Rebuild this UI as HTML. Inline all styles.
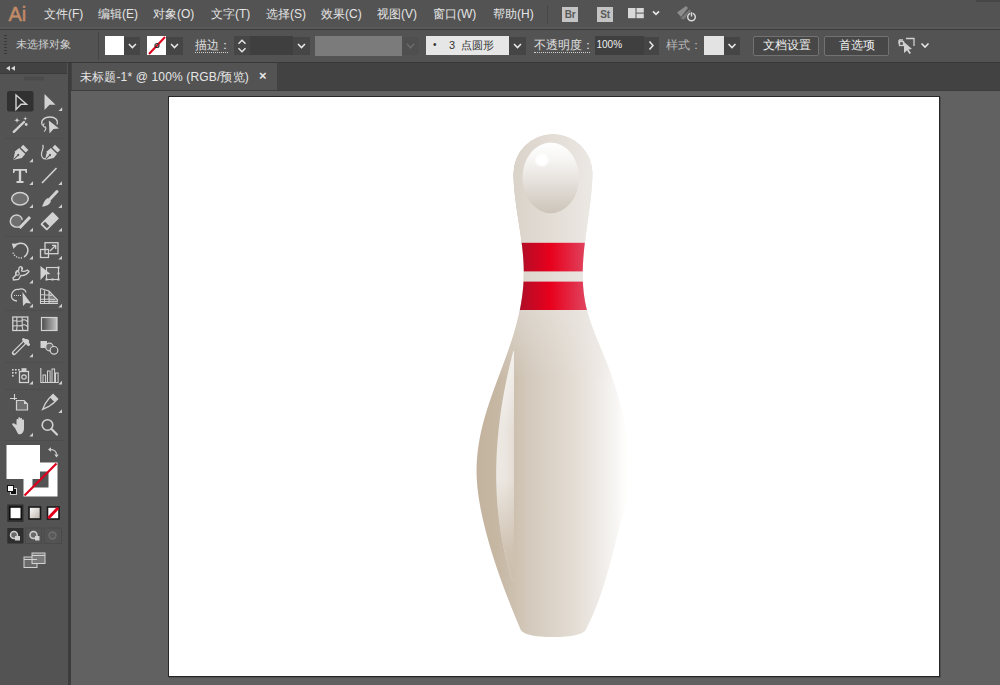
<!DOCTYPE html><html><head><meta charset="utf-8"><style>
*{margin:0;padding:0;box-sizing:border-box}
html,body{width:1000px;height:685px;overflow:hidden}
body{position:relative;background:#616161;font-family:"Liberation Sans",sans-serif;color:#e2e2e2}
.a{position:absolute}
.menu{font-size:12px;color:#e4e4e4;top:7px;white-space:nowrap;line-height:14px}
.chev{background:#454545}
.ctl{font-size:12px;white-space:nowrap;line-height:14px}
</style></head><body>
<div class="a" style="left:0;top:0;width:1000px;height:28px;background:#535353"></div>
<div class="a" style="left:0;top:27px;width:1000px;height:2px;background:#595959"></div>
<div class="a" style="left:976px;top:0;width:24px;height:2px;background:#474747"></div>
<div class="a" style="left:0;top:29px;width:1000px;height:1px;background:#3b3b3b"></div>
<div class="a" style="left:8.5px;top:2.5px;font-size:20px;color:#c28b68;line-height:22px;-webkit-text-stroke:0.5px #c28b68">Ai</div>
<div class="a menu" style="left:44px">文件(F)</div>
<div class="a menu" style="left:98px">编辑(E)</div>
<div class="a menu" style="left:153px">对象(O)</div>
<div class="a menu" style="left:211px">文字(T)</div>
<div class="a menu" style="left:266px">选择(S)</div>
<div class="a menu" style="left:321px">效果(C)</div>
<div class="a menu" style="left:377px">视图(V)</div>
<div class="a menu" style="left:433px">窗口(W)</div>
<div class="a menu" style="left:493px">帮助(H)</div>
<div class="a" style="left:547px;top:5px;width:1px;height:19px;background:#474747"></div>
<div class="a" style="left:562px;top:7px;width:16px;height:15px;background:#c4c4c4"></div>
<div class="a" style="left:562px;top:8px;width:16px;font-size:10px;line-height:13px;font-weight:bold;color:#5a5a5a;text-align:center;letter-spacing:-0.3px">Br</div>
<div class="a" style="left:597px;top:7px;width:16px;height:15px;background:#c4c4c4"></div>
<div class="a" style="left:597px;top:8px;width:16px;font-size:10px;line-height:13px;font-weight:bold;color:#5a5a5a;text-align:center;letter-spacing:-0.3px">St</div>
<svg class="a" style="left:620px;top:0" width="90" height="28" viewBox="620 0 90 28"><rect x="628" y="8" width="7.5" height="10.2" fill="#d8d8d8"/><rect x="636.5" y="8" width="7.3" height="4.6" fill="#d8d8d8"/><rect x="636.5" y="13.6" width="7.3" height="4.6" fill="#d8d8d8"/><path d="M653,11.3 L656,14.3 L659,11.3" fill="none" stroke="#e6e6e6" stroke-width="1.7"/><path d="M677,12.5 L686,6 L688,8 L681,17 Z" fill="#8c8c8c"/><path d="M680.5,18.5 L689.5,9.5 L691,11 L684,19.5 Z" fill="#7a7a7a"/><circle cx="691.5" cy="17" r="5.2" fill="#535353"/><circle cx="691.5" cy="17" r="3.8" fill="none" stroke="#d8d8d8" stroke-width="1.5"/><path d="M691.5,11.8 L691.5,16.5" stroke="#535353" stroke-width="2.6"/><path d="M691.5,12.2 L691.5,16.5" stroke="#d8d8d8" stroke-width="1.5"/></svg>
<div class="a" style="left:0;top:30px;width:1000px;height:32px;background:#535353"></div>
<div class="a" style="left:0;top:62px;width:1000px;height:1px;background:#383838"></div>
<div class="a" style="left:4px;top:35px;width:3px;height:1px;background:#3a3a3a;"></div>
<div class="a" style="left:4px;top:38px;width:3px;height:1px;background:#3a3a3a;"></div>
<div class="a" style="left:4px;top:41px;width:3px;height:1px;background:#3a3a3a;"></div>
<div class="a" style="left:4px;top:44px;width:3px;height:1px;background:#3a3a3a;"></div>
<div class="a" style="left:4px;top:47px;width:3px;height:1px;background:#3a3a3a;"></div>
<div class="a" style="left:4px;top:50px;width:3px;height:1px;background:#3a3a3a;"></div>
<div class="a" style="left:4px;top:53px;width:3px;height:1px;background:#3a3a3a;"></div>
<div class="a ctl" style="left:15.5px;top:37.0px;font-size:11px;color:#d2d2d2;">未选择对象</div>
<div class="a" style="left:98px;top:32px;width:1px;height:28px;background:#454545;"></div>
<div class="a" style="left:105px;top:36px;width:18.5px;height:19px;background:#ffffff;"></div>
<div class="a" style="left:124px;top:37px;width:16px;height:18px;background:#454545;"></div>
<div class="a" style="left:147px;top:36px;width:19px;height:19px;background:#ffffff;"></div>
<div class="a" style="left:166px;top:37px;width:17px;height:18px;background:#454545;"></div>
<div class="a ctl" style="left:195px;top:37.5px;font-size:12px;color:#e0e0e0;">描边：</div>
<div class="a" style="left:195px;top:52px;width:33px;height:1px;border-top:1px dotted #cfcfcf"></div>
<div class="a" style="left:234px;top:36px;width:16px;height:19px;background:#464646;"></div>
<div class="a" style="left:250px;top:36px;width:43px;height:19px;background:#3f3f3f;"></div>
<div class="a" style="left:293px;top:37px;width:17px;height:18px;background:#464646;"></div>
<div class="a" style="left:315px;top:36px;width:87px;height:20px;background:#7b7b7b;"></div>
<div class="a" style="left:402px;top:37px;width:17px;height:18px;background:#4f4f4f;"></div>
<div class="a" style="left:426px;top:36px;width:83px;height:19px;background:#e6e6e6;"></div>
<div class="a ctl" style="left:433px;top:38.0px;font-size:10px;color:#333;">•</div>
<div class="a ctl" style="left:449px;top:38.0px;font-size:11px;color:#333;">3</div>
<div class="a ctl" style="left:461px;top:38.0px;font-size:11.3px;color:#333;">点圆形</div>
<div class="a" style="left:509px;top:37px;width:17px;height:18px;background:#454545;"></div>
<div class="a ctl" style="left:534px;top:37.5px;font-size:12px;color:#e0e0e0;">不透明度：</div>
<div class="a" style="left:534px;top:52px;width:56px;height:1px;border-top:1px dotted #cfcfcf"></div>
<div class="a" style="left:595px;top:36px;width:49px;height:19px;background:#3f3f3f;"></div>
<div class="a ctl" style="left:596.5px;top:37.5px;font-size:10px;color:#f0f0f0;">100%</div>
<div class="a" style="left:644px;top:37px;width:15px;height:18px;background:#454545;"></div>
<div class="a ctl" style="left:666px;top:37.5px;font-size:12px;color:#b8b8b8;">样式：</div>
<div class="a" style="left:704px;top:36px;width:20px;height:19px;background:#e3e3e3;"></div>
<div class="a" style="left:724px;top:37px;width:16px;height:18px;background:#454545;"></div>
<div class="a" style="left:753px;top:36px;width:66px;height:20px;border:1px solid #727272;background:#474747;border-radius:2px"></div>
<div class="a ctl" style="left:763px;top:37.5px;font-size:12px;color:#f0f0f0;">文档设置</div>
<div class="a" style="left:824px;top:36px;width:65px;height:20px;border:1px solid #727272;background:#474747;border-radius:2px"></div>
<div class="a ctl" style="left:839px;top:37.5px;font-size:12px;color:#f0f0f0;">首选项</div>
<svg class="a" style="left:0;top:29px" width="1000" height="33" viewBox="0 29 1000 33"><path d="M128.9,44.0 L132.4,47.6 L135.9,44.0" fill="none" stroke="#e8e8e8" stroke-width="1.5"/><path d="M171.0,44.0 L174.5,47.6 L178.0,44.0" fill="none" stroke="#e8e8e8" stroke-width="1.5"/><line x1="149" y1="54" x2="165" y2="37" stroke="#e0001c" stroke-width="2"/><circle cx="157" cy="45.5" r="2" fill="none" stroke="#333" stroke-width="1.2"/><path d="M238.5,43.8 L242.0,40.2 L245.5,43.8" fill="none" stroke="#e8e8e8" stroke-width="1.4"/><path d="M238.5,48.2 L242.0,51.8 L245.5,48.2" fill="none" stroke="#e8e8e8" stroke-width="1.4"/><path d="M298.0,44.0 L301.5,47.6 L305.0,44.0" fill="none" stroke="#e8e8e8" stroke-width="1.5"/><path d="M407.0,43.8 L410.5,47.8 L414.0,43.8" fill="none" stroke="#6a6a6a" stroke-width="1.5"/><path d="M514.0,44.0 L517.5,47.6 L521.0,44.0" fill="none" stroke="#e8e8e8" stroke-width="1.5"/><path d="M649.5,41.5 L653,45.5 L649.5,49.5" fill="none" stroke="#e8e8e8" stroke-width="1.5"/><path d="M728.5,44.0 L732.0,47.6 L735.5,44.0" fill="none" stroke="#e8e8e8" stroke-width="1.5"/><path d="M921.5,43.5 L925.0,47.1 L928.5,43.5" fill="none" stroke="#e8e8e8" stroke-width="1.5"/><g fill="none" stroke="#cfcfcf" stroke-width="1.3"><path d="M899,40 L903,40 M899,40 L899,44" /><rect x="899.5" y="41.5" width="4" height="4"/><path d="M906,38.5 L914,38.5 L914,46"/></g><path d="M904,42 L904,53 L907,50.5 L909.5,54 L911,53 L908.5,49.5 L912,49 Z" fill="#d0d0d0"/></svg>
<div class="a" style="left:71px;top:63px;width:929px;height:27px;background:#424242"></div>
<div class="a" style="left:72px;top:63px;width:205px;height:27px;background:#535353"></div>
<div class="a" style="left:71px;top:90px;width:929px;height:1px;background:#3d3d3d"></div>
<div class="a ctl" style="left:80px;top:70px;color:#e6e6e6;letter-spacing:0.15px">未标题-1* @ 100% (RGB/预览)</div>
<div class="a" style="left:259px;top:68px;font-size:13px;font-weight:bold;color:#e6e6e6">×</div>
<div class="a" style="left:0;top:63px;width:68px;height:622px;background:#535353"></div>
<div class="a" style="left:68px;top:63px;width:3px;height:622px;background:#3c3c3c"></div>
<div class="a" style="left:0;top:63px;width:67px;height:10px;background:#424242"></div>
<div class="a" style="left:0;top:73px;width:67px;height:1px;background:#3a3a3a"></div>
<svg class="a" style="left:0;top:62px" width="70" height="623" viewBox="0 62 70 623">
<path d="M6,68.3 L10,65.8 L10,70.8 Z M11,68.3 L15,65.8 L15,70.8 Z" fill="#d8d8d8"/>
<rect x="24.5" y="76.5" width="1" height="4" fill="#444444"/>
<rect x="26.5" y="76.5" width="1" height="4" fill="#444444"/>
<rect x="28.5" y="76.5" width="1" height="4" fill="#444444"/>
<rect x="30.5" y="76.5" width="1" height="4" fill="#444444"/>
<rect x="32.5" y="76.5" width="1" height="4" fill="#444444"/>
<rect x="34.5" y="76.5" width="1" height="4" fill="#444444"/>
<rect x="36.5" y="76.5" width="1" height="4" fill="#444444"/>
<rect x="38.5" y="76.5" width="1" height="4" fill="#444444"/>
<rect x="40.5" y="76.5" width="1" height="4" fill="#444444"/>
<rect x="42.5" y="76.5" width="1" height="4" fill="#444444"/>
<rect x="7" y="91" width="26.5" height="20.5" rx="2" fill="#313131"/>
<path d="M16,95 L26.5,104.3 L21,104.3 L16,109.5 Z" fill="none" stroke="#d2d2d2" stroke-width="1.4" stroke-linejoin="miter"/>
<path d="M44.5,94 L55.5,104.8 L49.5,104.8 L44.5,110 Z" fill="#d2d2d2"/>
<path d="M62.2,107.3 L62.2,111.0 L58.5,111.0 Z" fill="#cfcfcf"/>
<path d="M13.8,131.8 L24,122" stroke="#d2d2d2" stroke-width="2.4" stroke-linecap="round"/>
<path d="M17,117.1 Q17,120.3 20.2,120.3 Q17,120.3 17,123.5 Q17,120.3 13.8,120.3 Q17,120.3 17,117.1 Z" fill="#d2d2d2"/>
<path d="M25.3,115.9 Q25.3,118.5 27.900000000000002,118.5 Q25.3,118.5 25.3,121.1 Q25.3,118.5 22.7,118.5 Q25.3,118.5 25.3,115.9 Z" fill="#d2d2d2"/>
<circle cx="26.2" cy="124.5" r="1.4" fill="#d2d2d2"/>
<path d="M42.5,125.5 C40,121 44,117 50,117 C55,117 58.5,120 57,124.5" fill="none" stroke="#d2d2d2" stroke-width="1.3"/>
<path d="M44.5,123.5 C42,125 43.5,127.5 45.5,127 C46.5,128.5 45,131 44,131.5" fill="none" stroke="#d2d2d2" stroke-width="1.2"/>
<path d="M48.8,120.5 L59,128.5 L53.5,129 L49.5,133.5 Z" fill="#d2d2d2"/>
<rect x="5" y="138" width="58" height="1" fill="#4d4d4d"/>
<g transform="translate(20,153.2) rotate(45) scale(1.02)"><path d="M-4.2,-3 L4.2,-3 L4.6,2 L0,9.5 L-4.6,2 Z" fill="#d2d2d2"/><rect x="-3.6" y="-8" width="7.2" height="3.6" fill="#d2d2d2"/><path d="M0,9 L0,3" stroke="#535353" stroke-width="1"/><circle cx="0" cy="2.5" r="1.1" fill="#535353"/></g>
<path d="M33.0,158.6 L33.0,162.3 L29.3,162.3 Z" fill="#cfcfcf"/>
<g transform="translate(51.8,153.2) rotate(45) scale(1.02)"><path d="M-4.2,-3 L4.2,-3 L4.6,2 L0,9.5 L-4.6,2 Z" fill="#d2d2d2"/><rect x="-3.6" y="-8" width="7.2" height="3.6" fill="#d2d2d2"/><path d="M0,9 L0,3" stroke="#535353" stroke-width="1"/><circle cx="0" cy="2.5" r="1.1" fill="#535353"/></g>
<path d="M42.5,145 C45,147 41,151 41.5,155 C42,158 44,159.5 46,158.5" fill="none" stroke="#d2d2d2" stroke-width="1.2"/>
<path d="M13,169 L27,169 L27,173 L25.8,173 L25,170.8 L21.2,170.8 L21.2,181 L23.5,181 L23.5,183 L16.5,183 L16.5,181 L18.8,181 L18.8,170.8 L15,170.8 L14.2,173 L13,173 Z" fill="#d2d2d2"/>
<path d="M33.0,181.3 L33.0,185.0 L29.3,185.0 Z" fill="#cfcfcf"/>
<path d="M42,183 L56.5,168" stroke="#d2d2d2" stroke-width="1.6"/>
<path d="M62.0,181.3 L62.0,185.0 L58.3,185.0 Z" fill="#cfcfcf"/>
<ellipse cx="20" cy="198.8" rx="8.3" ry="6.2" fill="#6f6f6f" stroke="#d2d2d2" stroke-width="1.5"/>
<path d="M33.0,204.3 L33.0,208.0 L29.3,208.0 Z" fill="#cfcfcf"/>
<path d="M57,191.5 L49.5,199.5" stroke="#d2d2d2" stroke-width="3" stroke-linecap="round"/>
<path d="M48,198 L51,201 C50,204 47,206.5 42,206.5 C43.5,204 44,200 48,198 Z" fill="#d2d2d2"/>
<path d="M62.0,204.3 L62.0,208.0 L58.3,208.0 Z" fill="#cfcfcf"/>
<path d="M19,227 C13,228 9.5,224 10.5,220 C11.5,215.5 17,213.5 20.5,216.5 C22,217.7 22.3,219 22,220" fill="#6f6f6f" stroke="#d2d2d2" stroke-width="1.4"/>
<path d="M30,217 L19.5,228" stroke="#d2d2d2" stroke-width="3"/>
<path d="M33.0,227.8 L33.0,231.5 L29.3,231.5 Z" fill="#cfcfcf"/>
<g transform="translate(49.5,221.5) rotate(45)"><rect x="-4.6" y="-9" width="9.2" height="17.5" rx="1" fill="#d2d2d2"/><rect x="-3" y="3.2" width="6" height="3.5" fill="#535353"/></g>
<path d="M62.0,227.8 L62.0,231.5 L58.3,231.5 Z" fill="#cfcfcf"/>
<rect x="5" y="236" width="58" height="1" fill="#4d4d4d"/>
<path d="M14.5,246.5 C17,242.5 23.5,242 26.5,246 C29,249.5 28,254.5 24,257" fill="none" stroke="#d2d2d2" stroke-width="1.5"/>
<path d="M22,257.8 C18,258.5 14,256 13,252.5" fill="none" stroke="#d2d2d2" stroke-width="1.5" stroke-dasharray="1.2,1.3"/>
<path d="M11.8,243.5 L17.5,243.8 L13.5,249 Z" fill="#d2d2d2"/>
<path d="M33.0,255.8 L33.0,259.5 L29.3,259.5 Z" fill="#cfcfcf"/>
<rect x="40.5" y="249.5" width="8" height="8" fill="none" stroke="#d2d2d2" stroke-width="1.3"/>
<rect x="45" y="242.7" width="13" height="11" fill="none" stroke="#d2d2d2" stroke-width="1.3"/>
<path d="M50,251 L55.5,245.5 M52,245.3 L55.7,245.3 L55.7,249" fill="none" stroke="#d2d2d2" stroke-width="1.3"/>
<path d="M62.0,255.8 L62.0,259.5 L58.3,259.5 Z" fill="#cfcfcf"/>
<path d="M13,278 L16,275 C15,272 17,270 18.5,271 L19,268 C20,266 22,266.5 22.5,268.5 L21.5,271 C24,272 26,271 27.5,270 L29,271.5 C27,274 24,276 21,275.5 L18.5,279.5 L13.5,280 Z" fill="none" stroke="#d2d2d2" stroke-width="1.3"/>
<circle cx="17.5" cy="273.5" r="1.8" fill="none" stroke="#d2d2d2" stroke-width="1.1"/>
<circle cx="22" cy="268.5" r="1" fill="#d2d2d2"/>
<path d="M33.0,279.8 L33.0,283.5 L29.3,283.5 Z" fill="#cfcfcf"/>
<rect x="46.5" y="267.5" width="12" height="12" fill="#5d5d5d" stroke="#d2d2d2" stroke-width="1.1"/>
<rect x="57.5" y="266.5" width="2" height="2" fill="#d2d2d2"/>
<rect x="45.5" y="278.5" width="2" height="2" fill="#d2d2d2"/>
<rect x="57.5" y="278.5" width="2" height="2" fill="#d2d2d2"/>
<rect x="51.5" y="278.5" width="2" height="2" fill="#d2d2d2"/>
<rect x="57.5" y="272.5" width="2" height="2" fill="#d2d2d2"/>
<path d="M40.5,266 L50.5,274 L45.5,274.5 L40.5,280 Z" fill="#d2d2d2"/>
<path d="M17,301 C12.5,301 11,297.5 11.5,295 C12,291.5 15,289 18.5,289.5 C21,288 25.5,289 26,292.5" fill="none" stroke="#d2d2d2" stroke-width="1.3"/>
<path d="M14,295.5 L21,295.5" stroke="#d2d2d2" stroke-width="1" stroke-dasharray="1,1"/>
<path d="M22.5,292 L31,303.5 L26,303 L23,306 Z" fill="#d2d2d2"/>
<path d="M33.0,303.8 L33.0,307.5 L29.3,307.5 Z" fill="#cfcfcf"/>
<path d="M40.5,288.5 L40.5,303.5 L58,303.5 M40.5,288.5 L49,291 L58,300.5 M44.5,289.6 L44.5,303.5 M49,291 L49,303.5 M40.5,294.5 L52,295.5 M40.5,299 L55,299.5 M40.5,301.5 L58,301.5" fill="none" stroke="#d2d2d2" stroke-width="1.1"/>
<path d="M49,291 L58,300.5 L58,303.5 L49,303.5 Z" fill="#d2d2d2" opacity="0.35"/>
<path d="M62.0,303.8 L62.0,307.5 L58.3,307.5 Z" fill="#cfcfcf"/>
<rect x="5" y="310" width="58" height="1" fill="#4d4d4d"/>
<rect x="12.8" y="317" width="15" height="13.5" fill="none" stroke="#d2d2d2" stroke-width="1.3"/>
<path d="M13,321 C17,320 19,323 23,320 C25,319 27,321 28,322 M13,326 C17,325 20,327 23,325 C25,324 27,326 28,327 M17,317 C16,321 18,325 16.5,330.5 M22,317 C23,321 21,325 23,330.5" fill="none" stroke="#d2d2d2" stroke-width="1.1"/>
<defs><linearGradient id="tg" x1="0" y1="0" x2="1" y2="0"><stop offset="0" stop-color="#4a4a4a"/><stop offset="1" stop-color="#c4c4c4"/></linearGradient></defs>
<rect x="41.5" y="317.5" width="15.5" height="13" fill="url(#tg)" stroke="#d2d2d2" stroke-width="1.2"/>
<path d="M25,342 L14,353" stroke="#d2d2d2" stroke-width="4.5" stroke-linecap="round"/>
<path d="M24,343 L14.5,352.5" stroke="#535353" stroke-width="2" stroke-linecap="round"/>
<path d="M23.5,339.5 L28.5,344.5" stroke="#d2d2d2" stroke-width="3" stroke-linecap="round"/>
<circle cx="26.5" cy="341.5" r="2.6" fill="#d2d2d2"/>
<path d="M33.0,353.6 L33.0,357.3 L29.3,357.3 Z" fill="#cfcfcf"/>
<rect x="40.5" y="341" width="6.5" height="7" fill="#d2d2d2"/>
<circle cx="49.5" cy="347" r="3.8" fill="#6a6a6a" stroke="#d2d2d2" stroke-width="1.2"/>
<circle cx="54" cy="350.3" r="3.8" fill="#535353" stroke="#d2d2d2" stroke-width="1.2"/>
<rect x="5" y="362" width="58" height="1" fill="#4d4d4d"/>
<rect x="12" y="369" width="1.6" height="1.6" fill="#d2d2d2"/>
<rect x="15" y="369" width="1.6" height="1.6" fill="#d2d2d2"/>
<rect x="18" y="369" width="1.6" height="1.6" fill="#d2d2d2"/>
<rect x="12" y="372" width="1.6" height="1.6" fill="#d2d2d2"/>
<rect x="15" y="372" width="1.6" height="1.6" fill="#d2d2d2"/>
<rect x="12" y="375" width="1.6" height="1.6" fill="#d2d2d2"/>
<rect x="19.5" y="371.5" width="9" height="11" fill="none" stroke="#d2d2d2" stroke-width="1.3"/>
<rect x="21.5" y="368.2" width="5" height="3" fill="#d2d2d2"/>
<circle cx="24" cy="377" r="2.2" fill="none" stroke="#d2d2d2" stroke-width="1.2"/>
<path d="M33.0,380.8 L33.0,384.5 L29.3,384.5 Z" fill="#cfcfcf"/>
<path d="M40.8,368 L40.8,382.5 L58,382.5" fill="none" stroke="#d2d2d2" stroke-width="1.1"/>
<rect x="43" y="375" width="2.6" height="7.5" fill="none" stroke="#d2d2d2" stroke-width="1"/>
<rect x="47.5" y="371" width="2.6" height="11.5" fill="none" stroke="#d2d2d2" stroke-width="1"/>
<rect x="52" y="369" width="2.6" height="13.5" fill="none" stroke="#d2d2d2" stroke-width="1"/>
<rect x="55.5" y="373" width="2.6" height="9.5" fill="none" stroke="#d2d2d2" stroke-width="1"/>
<path d="M62.0,380.8 L62.0,384.5 L58.3,384.5 Z" fill="#cfcfcf"/>
<rect x="5" y="389" width="58" height="1" fill="#4d4d4d"/>
<path d="M14.5,394 L14.5,400 M10,398.5 L17,398.5" stroke="#d2d2d2" stroke-width="1.1"/>
<path d="M16.5,400.5 L24,400.5 L27.5,404 L27.5,410 L16.5,410 Z" fill="#6f6f6f" stroke="#d2d2d2" stroke-width="1.2"/>
<path d="M24,400.5 L24,404 L27.5,404" fill="#d2d2d2"/>
<g transform="translate(49,403) rotate(45)"><path d="M-3.2,-9 L3.2,-9 L3.2,-3 L2.2,3 L0,9 L-2.2,3 L-3.2,-3 Z" fill="none" stroke="#d2d2d2" stroke-width="1.3"/><rect x="-3.2" y="-9" width="6.4" height="4.5" fill="#d2d2d2"/></g>
<path d="M62.0,409.3 L62.0,413.0 L58.3,413.0 Z" fill="#cfcfcf"/>
<path d="M15,428 C13,425.5 11.5,424.5 12.5,423.5 C13.5,422.5 15.5,424 16.5,425 L16.5,419.8 C16.5,418.6 18.3,418.6 18.3,419.8 L18.3,424 L18.3,418.3 C18.3,417 20.2,417 20.2,418.3 L20.2,424 L20.2,418.8 C20.2,417.6 22.1,417.6 22.1,418.8 L22.1,424.3 L22.1,420.3 C22.1,419.1 24,419.1 24,420.3 L24,428 C24,432 22,434.3 19.5,434.3 C17.5,434.3 16.5,430.5 15,428 Z" fill="#d2d2d2"/>
<path d="M33.0,432.8 L33.0,436.5 L29.3,436.5 Z" fill="#cfcfcf"/>
<circle cx="47.5" cy="425" r="5.3" fill="none" stroke="#d2d2d2" stroke-width="1.6"/>
<path d="M51.5,429 L57,434.5" stroke="#d2d2d2" stroke-width="2.2" stroke-linecap="round"/>
<rect x="5" y="440" width="58" height="1" fill="#4d4d4d"/>
<rect x="23.5" y="462.5" width="34" height="34" fill="#ffffff"/>
<rect x="32.5" y="471.5" width="16" height="16" fill="#535353"/>
<path d="M24.5,495.5 L56.5,463.5" stroke="#e0001c" stroke-width="2.2"/>
<rect x="6.5" y="445" width="33.5" height="34" fill="#ffffff"/>
<path d="M49.5,449.5 C53,449.5 56.5,450 56.5,454.5" fill="none" stroke="#d2d2d2" stroke-width="1.2"/>
<path d="M48,449.5 L51,447.3 L51,451.7 Z M56.5,457.5 L54.3,454.5 L58.7,454.5 Z" fill="#d2d2d2"/>
<rect x="10.5" y="488.5" width="6" height="6" fill="#111" stroke="#d2d2d2" stroke-width="1"/>
<rect x="7.5" y="485.5" width="6" height="6" fill="#fff" stroke="#111" stroke-width="1"/>
<rect x="7.3" y="504.5" width="16.2" height="17.4" fill="#2f2f2f"/>
<rect x="9.8" y="507" width="11.5" height="12" fill="#fff" stroke="#111" stroke-width="1.6"/>
<defs><linearGradient id="tg2" x1="0" y1="0" x2="1" y2="1"><stop offset="0" stop-color="#ffffff"/><stop offset="1" stop-color="#b9b0a6"/></linearGradient></defs>
<rect x="29" y="507" width="11.5" height="12" fill="url(#tg2)" stroke="#1a1a1a" stroke-width="1.6"/>
<rect x="47.5" y="507" width="11.5" height="12" fill="#fff" stroke="#1a1a1a" stroke-width="1.6"/>
<path d="M48.3,518.2 L58.2,507.8" stroke="#e0001c" stroke-width="3"/>
<rect x="7.3" y="528" width="16.2" height="15.5" fill="#2f2f2f"/>
<rect x="25.5" y="528" width="16" height="15.5" fill="none" stroke="#4a4a4a" stroke-width="1"/>
<rect x="44" y="528" width="17.5" height="15.5" fill="none" stroke="#4a4a4a" stroke-width="1"/>
<circle cx="14" cy="535" r="3.5" fill="#6a6a6a" stroke="#d2d2d2" stroke-width="1.5"/><rect x="15" y="536" width="5" height="4.5" fill="#d2d2d2"/>
<circle cx="33.5" cy="535" r="3.5" fill="#6a6a6a" stroke="#d2d2d2" stroke-width="1.5"/><rect x="35" y="536" width="4.5" height="4.5" fill="#d2d2d2"/>
<circle cx="52.5" cy="535.5" r="3.5" fill="#5a5a5a" stroke="#6e6e6e" stroke-width="1.4"/>
<rect x="24" y="557" width="13" height="10.5" fill="#6a6a6a" stroke="#d2d2d2" stroke-width="1"/>
<rect x="32" y="553" width="13" height="10.5" fill="#7a7a7a" stroke="#d2d2d2" stroke-width="1"/>
<path d="M24,559.5 L37,559.5 M32,555.5 L45,555.5" stroke="#d2d2d2" stroke-width="1"/>
</svg>
<div class="a" style="left:168px;top:96px;width:772px;height:581px;background:#fff;border:1px solid #262626;box-shadow:1px 1px 0 #505050"></div>
<svg class="a" style="left:0;top:0" width="1000" height="685" viewBox="0 0 1000 685"><defs><clipPath id="pc"><path d="M513.50,173.70 A39.5,39.5 0 0 1 592.50,173.70 L592.43,175.20 L592.38,176.70 L592.32,178.20 L592.25,179.70 L592.17,181.20 L592.08,182.70 L591.98,184.20 L591.87,185.70 L591.75,187.20 L591.63,188.70 L591.50,190.20 L591.36,191.70 L591.21,193.20 L591.06,194.70 L590.90,196.20 L590.74,197.70 L590.57,199.20 L590.40,200.70 L590.22,202.20 L590.03,203.70 L589.85,205.20 L589.66,206.70 L589.46,208.20 L589.26,209.70 L589.06,211.20 L588.86,212.70 L588.65,214.20 L588.45,215.70 L588.24,217.20 L588.03,218.70 L587.82,220.20 L587.61,221.70 L587.40,223.20 L587.19,224.70 L586.98,226.20 L586.77,227.70 L586.57,229.20 L586.36,230.70 L586.16,232.20 L585.96,233.70 L585.76,235.20 L585.57,236.70 L585.38,238.20 L585.19,239.70 L585.01,241.20 L584.83,242.70 L584.65,244.20 L584.49,245.70 L584.32,247.20 L584.16,248.70 L584.01,250.20 L583.87,251.70 L583.73,253.20 L583.60,254.70 L583.48,256.20 L583.36,257.70 L583.26,259.20 L583.16,260.70 L583.07,262.20 L582.99,263.70 L582.92,265.20 L582.86,266.70 L582.81,268.20 L582.77,269.70 L582.74,271.20 L582.72,272.70 L582.72,274.20 L582.72,275.70 L582.74,277.20 L582.77,278.70 L582.82,280.20 L582.88,281.70 L582.95,283.20 L583.03,284.70 L583.13,286.20 L583.25,287.70 L583.38,289.20 L583.52,290.70 L583.69,292.20 L583.86,293.70 L584.06,295.20 L584.27,296.70 L584.50,298.20 L584.74,299.70 L585.00,301.20 L585.28,302.70 L585.58,304.20 L585.90,305.70 L586.24,307.20 L586.60,308.70 L586.98,310.20 L587.37,311.70 L587.79,313.20 L588.22,314.70 L588.67,316.20 L589.14,317.70 L589.62,319.20 L590.12,320.70 L590.63,322.20 L591.15,323.70 L591.68,325.20 L592.23,326.70 L592.78,328.20 L593.35,329.70 L593.92,331.20 L594.50,332.70 L595.09,334.20 L595.68,335.70 L596.28,337.20 L596.89,338.70 L597.50,340.20 L598.11,341.70 L598.73,343.20 L599.34,344.70 L599.97,346.20 L600.59,347.70 L601.21,349.20 L601.83,350.70 L602.46,352.20 L603.08,353.70 L603.69,355.20 L604.31,356.70 L604.92,358.20 L605.53,359.70 L606.13,361.20 L606.73,362.70 L607.32,364.20 L607.90,365.70 L608.48,367.20 L609.05,368.70 L609.61,370.20 L610.16,371.70 L610.71,373.20 L611.25,374.70 L611.78,376.20 L612.30,377.70 L612.81,379.20 L613.32,380.70 L613.82,382.20 L614.31,383.70 L614.79,385.20 L615.27,386.70 L615.74,388.20 L616.20,389.70 L616.66,391.20 L617.11,392.70 L617.55,394.20 L617.98,395.70 L618.41,397.20 L618.83,398.70 L619.25,400.20 L619.65,401.70 L620.05,403.20 L620.45,404.70 L620.83,406.20 L621.21,407.70 L621.59,409.20 L621.96,410.70 L622.32,412.20 L622.67,413.70 L623.02,415.20 L623.36,416.70 L623.70,418.20 L624.03,419.70 L624.36,421.20 L624.67,422.70 L624.99,424.20 L625.29,425.70 L625.60,427.20 L625.89,428.70 L626.18,430.20 L626.47,431.70 L626.75,433.20 L627.02,434.70 L627.29,436.20 L627.55,437.70 L627.81,439.20 L628.06,440.70 L628.31,442.20 L628.55,443.70 L628.78,445.20 L629.01,446.70 L629.23,448.20 L629.45,449.70 L629.65,451.20 L629.84,452.70 L630.03,454.20 L630.20,455.70 L630.36,457.20 L630.50,458.70 L630.63,460.20 L630.74,461.70 L630.84,463.20 L630.93,464.70 L630.99,466.20 L631.04,467.70 L631.06,469.20 L631.07,470.70 L631.06,472.20 L631.02,473.70 L630.96,475.20 L630.88,476.70 L630.78,478.20 L630.65,479.70 L630.50,481.20 L630.33,482.70 L630.14,484.20 L629.93,485.70 L629.70,487.20 L629.45,488.70 L629.18,490.20 L628.89,491.70 L628.58,493.20 L628.25,494.70 L627.91,496.20 L627.56,497.70 L627.19,499.20 L626.81,500.70 L626.42,502.20 L626.02,503.70 L625.61,505.20 L625.20,506.70 L624.78,508.20 L624.35,509.70 L623.92,511.20 L623.49,512.70 L623.06,514.20 L622.63,515.70 L622.20,517.20 L621.77,518.70 L621.34,520.20 L620.92,521.70 L620.51,523.20 L620.10,524.70 L619.70,526.20 L619.30,527.70 L618.90,529.20 L618.51,530.70 L618.13,532.20 L617.74,533.70 L617.36,535.20 L616.98,536.70 L616.60,538.20 L616.22,539.70 L615.85,541.20 L615.47,542.70 L615.09,544.20 L614.71,545.70 L614.33,547.20 L613.95,548.70 L613.57,550.20 L613.19,551.70 L612.80,553.20 L612.42,554.70 L612.03,556.20 L611.64,557.70 L611.25,559.20 L610.85,560.70 L610.45,562.20 L610.05,563.70 L609.64,565.20 L609.23,566.70 L608.82,568.20 L608.40,569.70 L607.98,571.20 L607.56,572.70 L607.13,574.20 L606.69,575.70 L606.25,577.20 L605.80,578.70 L605.35,580.20 L604.89,581.70 L604.43,583.20 L603.96,584.70 L603.48,586.20 L602.99,587.70 L602.50,589.20 L602.00,590.70 L601.50,592.20 L600.98,593.70 L600.46,595.20 L599.93,596.70 L599.39,598.20 L598.85,599.70 L598.29,601.20 L597.73,602.70 L597.15,604.20 L596.57,605.70 L595.97,607.20 L595.37,608.70 L594.76,610.20 L594.13,611.70 L593.50,613.20 L592.85,614.70 L592.19,616.20 L591.52,617.70 L590.84,619.20 L590.15,620.70 L589.45,622.20 L588.73,623.70 L588.00,625.20 L587.26,626.70 L586.51,628.20 L585.89,629.40 C584.39,633.90 571.89,637.00 553.00,637.00 C534.57,637.00 522.07,633.90 520.57,629.40 L520.06,628.20 L519.43,626.70 L518.80,625.20 L518.17,623.70 L517.54,622.20 L516.92,620.70 L516.29,619.20 L515.67,617.70 L515.06,616.20 L514.44,614.70 L513.83,613.20 L513.22,611.70 L512.61,610.20 L512.01,608.70 L511.41,607.20 L510.81,605.70 L510.21,604.20 L509.62,602.70 L509.03,601.20 L508.44,599.70 L507.86,598.20 L507.28,596.70 L506.70,595.20 L506.12,593.70 L505.55,592.20 L504.99,590.70 L504.42,589.20 L503.86,587.70 L503.30,586.20 L502.75,584.70 L502.20,583.20 L501.65,581.70 L501.11,580.20 L500.57,578.70 L500.04,577.20 L499.51,575.70 L498.98,574.20 L498.46,572.70 L497.94,571.20 L497.42,569.70 L496.91,568.20 L496.41,566.70 L495.91,565.20 L495.41,563.70 L494.91,562.20 L494.43,560.70 L493.94,559.20 L493.46,557.70 L492.99,556.20 L492.52,554.70 L492.05,553.20 L491.59,551.70 L491.13,550.20 L490.68,548.70 L490.23,547.20 L489.79,545.70 L489.36,544.20 L488.93,542.70 L488.50,541.20 L488.08,539.70 L487.66,538.20 L487.25,536.70 L486.85,535.20 L486.45,533.70 L486.05,532.20 L485.66,530.70 L485.28,529.20 L484.90,527.70 L484.53,526.20 L484.16,524.70 L483.80,523.20 L483.45,521.70 L483.10,520.20 L482.76,518.70 L482.42,517.20 L482.09,515.70 L481.77,514.20 L481.45,512.70 L481.14,511.20 L480.84,509.70 L480.55,508.20 L480.26,506.70 L479.99,505.20 L479.72,503.70 L479.46,502.20 L479.21,500.70 L478.97,499.20 L478.74,497.70 L478.51,496.20 L478.30,494.70 L478.10,493.20 L477.92,491.70 L477.74,490.20 L477.57,488.70 L477.42,487.20 L477.27,485.70 L477.14,484.20 L477.03,482.70 L476.92,481.20 L476.83,479.70 L476.75,478.20 L476.69,476.70 L476.63,475.20 L476.60,473.70 L476.58,472.20 L476.57,470.70 L476.57,469.20 L476.60,467.70 L476.63,466.20 L476.68,464.70 L476.74,463.20 L476.82,461.70 L476.91,460.20 L477.01,458.70 L477.13,457.20 L477.26,455.70 L477.41,454.20 L477.56,452.70 L477.73,451.20 L477.92,449.70 L478.11,448.20 L478.32,446.70 L478.54,445.20 L478.77,443.70 L479.01,442.20 L479.27,440.70 L479.54,439.20 L479.81,437.70 L480.11,436.20 L480.41,434.70 L480.72,433.20 L481.05,431.70 L481.38,430.20 L481.73,428.70 L482.08,427.20 L482.45,425.70 L482.83,424.20 L483.22,422.70 L483.62,421.20 L484.02,419.70 L484.44,418.20 L484.87,416.70 L485.31,415.20 L485.75,413.70 L486.21,412.20 L486.67,410.70 L487.14,409.20 L487.61,407.70 L488.10,406.20 L488.59,404.70 L489.08,403.20 L489.59,401.70 L490.10,400.20 L490.61,398.70 L491.13,397.20 L491.66,395.70 L492.19,394.20 L492.72,392.70 L493.26,391.20 L493.80,389.70 L494.35,388.20 L494.89,386.70 L495.44,385.20 L496.00,383.70 L496.55,382.20 L497.11,380.70 L497.67,379.20 L498.23,377.70 L498.79,376.20 L499.36,374.70 L499.92,373.20 L500.48,371.70 L501.04,370.20 L501.60,368.70 L502.16,367.20 L502.72,365.70 L503.28,364.20 L503.84,362.70 L504.39,361.20 L504.94,359.70 L505.49,358.20 L506.04,356.70 L506.58,355.20 L507.12,353.70 L507.65,352.20 L508.18,350.70 L508.71,349.20 L509.23,347.70 L509.74,346.20 L510.25,344.70 L510.75,343.20 L511.25,341.70 L511.74,340.20 L512.23,338.70 L512.70,337.20 L513.17,335.70 L513.64,334.20 L514.09,332.70 L514.54,331.20 L514.97,329.70 L515.40,328.20 L515.82,326.70 L516.23,325.20 L516.63,323.70 L517.02,322.20 L517.40,320.70 L517.77,319.20 L518.13,317.70 L518.49,316.20 L518.83,314.70 L519.16,313.20 L519.48,311.70 L519.79,310.20 L520.09,308.70 L520.38,307.20 L520.66,305.70 L520.92,304.20 L521.18,302.70 L521.42,301.20 L521.66,299.70 L521.88,298.20 L522.09,296.70 L522.29,295.20 L522.48,293.70 L522.65,292.20 L522.81,290.70 L522.97,289.20 L523.10,287.70 L523.23,286.20 L523.35,284.70 L523.45,283.20 L523.54,281.70 L523.61,280.20 L523.67,278.70 L523.72,277.20 L523.76,275.70 L523.78,274.20 L523.79,272.70 L523.79,271.20 L523.77,269.70 L523.74,268.20 L523.70,266.70 L523.65,265.20 L523.58,263.70 L523.50,262.20 L523.41,260.70 L523.32,259.20 L523.21,257.70 L523.09,256.20 L522.96,254.70 L522.82,253.20 L522.68,251.70 L522.52,250.20 L522.36,248.70 L522.19,247.20 L522.01,245.70 L521.83,244.20 L521.64,242.70 L521.45,241.20 L521.25,239.70 L521.05,238.20 L520.84,236.70 L520.63,235.20 L520.41,233.70 L520.19,232.20 L519.97,230.70 L519.74,229.20 L519.51,227.70 L519.29,226.20 L519.06,224.70 L518.83,223.20 L518.59,221.70 L518.36,220.20 L518.13,218.70 L517.90,217.20 L517.68,215.70 L517.45,214.20 L517.22,212.70 L517.00,211.20 L516.78,209.70 L516.56,208.20 L516.35,206.70 L516.14,205.20 L515.94,203.70 L515.74,202.20 L515.55,200.70 L515.36,199.20 L515.18,197.70 L515.00,196.20 L514.83,194.70 L514.67,193.20 L514.51,191.70 L514.37,190.20 L514.23,188.70 L514.10,187.20 L513.98,185.70 L513.88,184.20 L513.78,182.70 L513.69,181.20 L513.61,179.70 L513.54,178.20 L513.49,176.70 L513.45,175.20 L513.50,173.70 Z"/></clipPath><linearGradient id="body" gradientUnits="userSpaceOnUse" x1="476" y1="0" x2="632" y2="0"><stop offset="0" stop-color="#c3b39e"/><stop offset="0.1346153846153846" stop-color="#c6b7a3"/><stop offset="0.24358974358974358" stop-color="#cdc0af"/><stop offset="0.34615384615384615" stop-color="#d4cabd"/><stop offset="0.4423076923076923" stop-color="#d9d0c4"/><stop offset="0.6346153846153846" stop-color="#e4ddd5"/><stop offset="0.7948717948717948" stop-color="#efebe7"/><stop offset="0.8910256410256411" stop-color="#f7f5f3"/><stop offset="0.9615384615384616" stop-color="#fefefd"/><stop offset="1" stop-color="#ffffff"/></linearGradient><linearGradient id="head" gradientUnits="userSpaceOnUse" x1="513" y1="0" x2="593" y2="0"><stop offset="0" stop-color="#dad3ca"/><stop offset="0.5" stop-color="#e3ddd6"/><stop offset="1" stop-color="#ece8e4"/></linearGradient><linearGradient id="red" gradientUnits="userSpaceOnUse" x1="520" y1="0" x2="587" y2="0"><stop offset="0" stop-color="#b00d28"/><stop offset="0.45" stop-color="#e8001c"/><stop offset="1" stop-color="#e04560"/></linearGradient><linearGradient id="cres" gradientUnits="userSpaceOnUse" x1="496" y1="0" x2="514" y2="0"><stop offset="0" stop-color="#ece8e2"/><stop offset="0.5" stop-color="#ebe6e0"/><stop offset="1" stop-color="#e4ddd5"/></linearGradient><linearGradient id="cresv" gradientUnits="userSpaceOnUse" x1="0" y1="351" x2="0" y2="581"><stop offset="0" stop-color="#ffffff" stop-opacity="0.6"/><stop offset="0.34347826086956523" stop-color="#ffffff" stop-opacity="0"/><stop offset="0.5608695652173913" stop-color="#cbbdab" stop-opacity="0"/><stop offset="0.8652173913043478" stop-color="#cbbdab" stop-opacity="0.85"/><stop offset="1" stop-color="#cbbdab" stop-opacity="0.95"/></linearGradient><linearGradient id="headin" gradientUnits="userSpaceOnUse" x1="0" y1="142.5" x2="0" y2="213.2"><stop offset="0" stop-color="#ffffff"/><stop offset="0.25" stop-color="#f6f5f3"/><stop offset="0.6" stop-color="#e3ded8"/><stop offset="1" stop-color="#cdc4b9"/></linearGradient><radialGradient id="hl" gradientUnits="userSpaceOnUse" cx="542" cy="160" r="8"><stop offset="0" stop-color="#ffffff"/><stop offset="0.6" stop-color="#ffffff"/><stop offset="1" stop-color="#ffffff" stop-opacity="0"/></radialGradient><linearGradient id="hmg" gradientUnits="userSpaceOnUse" x1="0" y1="120" x2="0" y2="380"><stop offset="0" stop-color="#fff"/><stop offset="0.69" stop-color="#fff"/><stop offset="1" stop-color="#000"/></linearGradient></defs><path d="M513.50,173.70 A39.5,39.5 0 0 1 592.50,173.70 L592.43,175.20 L592.38,176.70 L592.32,178.20 L592.25,179.70 L592.17,181.20 L592.08,182.70 L591.98,184.20 L591.87,185.70 L591.75,187.20 L591.63,188.70 L591.50,190.20 L591.36,191.70 L591.21,193.20 L591.06,194.70 L590.90,196.20 L590.74,197.70 L590.57,199.20 L590.40,200.70 L590.22,202.20 L590.03,203.70 L589.85,205.20 L589.66,206.70 L589.46,208.20 L589.26,209.70 L589.06,211.20 L588.86,212.70 L588.65,214.20 L588.45,215.70 L588.24,217.20 L588.03,218.70 L587.82,220.20 L587.61,221.70 L587.40,223.20 L587.19,224.70 L586.98,226.20 L586.77,227.70 L586.57,229.20 L586.36,230.70 L586.16,232.20 L585.96,233.70 L585.76,235.20 L585.57,236.70 L585.38,238.20 L585.19,239.70 L585.01,241.20 L584.83,242.70 L584.65,244.20 L584.49,245.70 L584.32,247.20 L584.16,248.70 L584.01,250.20 L583.87,251.70 L583.73,253.20 L583.60,254.70 L583.48,256.20 L583.36,257.70 L583.26,259.20 L583.16,260.70 L583.07,262.20 L582.99,263.70 L582.92,265.20 L582.86,266.70 L582.81,268.20 L582.77,269.70 L582.74,271.20 L582.72,272.70 L582.72,274.20 L582.72,275.70 L582.74,277.20 L582.77,278.70 L582.82,280.20 L582.88,281.70 L582.95,283.20 L583.03,284.70 L583.13,286.20 L583.25,287.70 L583.38,289.20 L583.52,290.70 L583.69,292.20 L583.86,293.70 L584.06,295.20 L584.27,296.70 L584.50,298.20 L584.74,299.70 L585.00,301.20 L585.28,302.70 L585.58,304.20 L585.90,305.70 L586.24,307.20 L586.60,308.70 L586.98,310.20 L587.37,311.70 L587.79,313.20 L588.22,314.70 L588.67,316.20 L589.14,317.70 L589.62,319.20 L590.12,320.70 L590.63,322.20 L591.15,323.70 L591.68,325.20 L592.23,326.70 L592.78,328.20 L593.35,329.70 L593.92,331.20 L594.50,332.70 L595.09,334.20 L595.68,335.70 L596.28,337.20 L596.89,338.70 L597.50,340.20 L598.11,341.70 L598.73,343.20 L599.34,344.70 L599.97,346.20 L600.59,347.70 L601.21,349.20 L601.83,350.70 L602.46,352.20 L603.08,353.70 L603.69,355.20 L604.31,356.70 L604.92,358.20 L605.53,359.70 L606.13,361.20 L606.73,362.70 L607.32,364.20 L607.90,365.70 L608.48,367.20 L609.05,368.70 L609.61,370.20 L610.16,371.70 L610.71,373.20 L611.25,374.70 L611.78,376.20 L612.30,377.70 L612.81,379.20 L613.32,380.70 L613.82,382.20 L614.31,383.70 L614.79,385.20 L615.27,386.70 L615.74,388.20 L616.20,389.70 L616.66,391.20 L617.11,392.70 L617.55,394.20 L617.98,395.70 L618.41,397.20 L618.83,398.70 L619.25,400.20 L619.65,401.70 L620.05,403.20 L620.45,404.70 L620.83,406.20 L621.21,407.70 L621.59,409.20 L621.96,410.70 L622.32,412.20 L622.67,413.70 L623.02,415.20 L623.36,416.70 L623.70,418.20 L624.03,419.70 L624.36,421.20 L624.67,422.70 L624.99,424.20 L625.29,425.70 L625.60,427.20 L625.89,428.70 L626.18,430.20 L626.47,431.70 L626.75,433.20 L627.02,434.70 L627.29,436.20 L627.55,437.70 L627.81,439.20 L628.06,440.70 L628.31,442.20 L628.55,443.70 L628.78,445.20 L629.01,446.70 L629.23,448.20 L629.45,449.70 L629.65,451.20 L629.84,452.70 L630.03,454.20 L630.20,455.70 L630.36,457.20 L630.50,458.70 L630.63,460.20 L630.74,461.70 L630.84,463.20 L630.93,464.70 L630.99,466.20 L631.04,467.70 L631.06,469.20 L631.07,470.70 L631.06,472.20 L631.02,473.70 L630.96,475.20 L630.88,476.70 L630.78,478.20 L630.65,479.70 L630.50,481.20 L630.33,482.70 L630.14,484.20 L629.93,485.70 L629.70,487.20 L629.45,488.70 L629.18,490.20 L628.89,491.70 L628.58,493.20 L628.25,494.70 L627.91,496.20 L627.56,497.70 L627.19,499.20 L626.81,500.70 L626.42,502.20 L626.02,503.70 L625.61,505.20 L625.20,506.70 L624.78,508.20 L624.35,509.70 L623.92,511.20 L623.49,512.70 L623.06,514.20 L622.63,515.70 L622.20,517.20 L621.77,518.70 L621.34,520.20 L620.92,521.70 L620.51,523.20 L620.10,524.70 L619.70,526.20 L619.30,527.70 L618.90,529.20 L618.51,530.70 L618.13,532.20 L617.74,533.70 L617.36,535.20 L616.98,536.70 L616.60,538.20 L616.22,539.70 L615.85,541.20 L615.47,542.70 L615.09,544.20 L614.71,545.70 L614.33,547.20 L613.95,548.70 L613.57,550.20 L613.19,551.70 L612.80,553.20 L612.42,554.70 L612.03,556.20 L611.64,557.70 L611.25,559.20 L610.85,560.70 L610.45,562.20 L610.05,563.70 L609.64,565.20 L609.23,566.70 L608.82,568.20 L608.40,569.70 L607.98,571.20 L607.56,572.70 L607.13,574.20 L606.69,575.70 L606.25,577.20 L605.80,578.70 L605.35,580.20 L604.89,581.70 L604.43,583.20 L603.96,584.70 L603.48,586.20 L602.99,587.70 L602.50,589.20 L602.00,590.70 L601.50,592.20 L600.98,593.70 L600.46,595.20 L599.93,596.70 L599.39,598.20 L598.85,599.70 L598.29,601.20 L597.73,602.70 L597.15,604.20 L596.57,605.70 L595.97,607.20 L595.37,608.70 L594.76,610.20 L594.13,611.70 L593.50,613.20 L592.85,614.70 L592.19,616.20 L591.52,617.70 L590.84,619.20 L590.15,620.70 L589.45,622.20 L588.73,623.70 L588.00,625.20 L587.26,626.70 L586.51,628.20 L585.89,629.40 C584.39,633.90 571.89,637.00 553.00,637.00 C534.57,637.00 522.07,633.90 520.57,629.40 L520.06,628.20 L519.43,626.70 L518.80,625.20 L518.17,623.70 L517.54,622.20 L516.92,620.70 L516.29,619.20 L515.67,617.70 L515.06,616.20 L514.44,614.70 L513.83,613.20 L513.22,611.70 L512.61,610.20 L512.01,608.70 L511.41,607.20 L510.81,605.70 L510.21,604.20 L509.62,602.70 L509.03,601.20 L508.44,599.70 L507.86,598.20 L507.28,596.70 L506.70,595.20 L506.12,593.70 L505.55,592.20 L504.99,590.70 L504.42,589.20 L503.86,587.70 L503.30,586.20 L502.75,584.70 L502.20,583.20 L501.65,581.70 L501.11,580.20 L500.57,578.70 L500.04,577.20 L499.51,575.70 L498.98,574.20 L498.46,572.70 L497.94,571.20 L497.42,569.70 L496.91,568.20 L496.41,566.70 L495.91,565.20 L495.41,563.70 L494.91,562.20 L494.43,560.70 L493.94,559.20 L493.46,557.70 L492.99,556.20 L492.52,554.70 L492.05,553.20 L491.59,551.70 L491.13,550.20 L490.68,548.70 L490.23,547.20 L489.79,545.70 L489.36,544.20 L488.93,542.70 L488.50,541.20 L488.08,539.70 L487.66,538.20 L487.25,536.70 L486.85,535.20 L486.45,533.70 L486.05,532.20 L485.66,530.70 L485.28,529.20 L484.90,527.70 L484.53,526.20 L484.16,524.70 L483.80,523.20 L483.45,521.70 L483.10,520.20 L482.76,518.70 L482.42,517.20 L482.09,515.70 L481.77,514.20 L481.45,512.70 L481.14,511.20 L480.84,509.70 L480.55,508.20 L480.26,506.70 L479.99,505.20 L479.72,503.70 L479.46,502.20 L479.21,500.70 L478.97,499.20 L478.74,497.70 L478.51,496.20 L478.30,494.70 L478.10,493.20 L477.92,491.70 L477.74,490.20 L477.57,488.70 L477.42,487.20 L477.27,485.70 L477.14,484.20 L477.03,482.70 L476.92,481.20 L476.83,479.70 L476.75,478.20 L476.69,476.70 L476.63,475.20 L476.60,473.70 L476.58,472.20 L476.57,470.70 L476.57,469.20 L476.60,467.70 L476.63,466.20 L476.68,464.70 L476.74,463.20 L476.82,461.70 L476.91,460.20 L477.01,458.70 L477.13,457.20 L477.26,455.70 L477.41,454.20 L477.56,452.70 L477.73,451.20 L477.92,449.70 L478.11,448.20 L478.32,446.70 L478.54,445.20 L478.77,443.70 L479.01,442.20 L479.27,440.70 L479.54,439.20 L479.81,437.70 L480.11,436.20 L480.41,434.70 L480.72,433.20 L481.05,431.70 L481.38,430.20 L481.73,428.70 L482.08,427.20 L482.45,425.70 L482.83,424.20 L483.22,422.70 L483.62,421.20 L484.02,419.70 L484.44,418.20 L484.87,416.70 L485.31,415.20 L485.75,413.70 L486.21,412.20 L486.67,410.70 L487.14,409.20 L487.61,407.70 L488.10,406.20 L488.59,404.70 L489.08,403.20 L489.59,401.70 L490.10,400.20 L490.61,398.70 L491.13,397.20 L491.66,395.70 L492.19,394.20 L492.72,392.70 L493.26,391.20 L493.80,389.70 L494.35,388.20 L494.89,386.70 L495.44,385.20 L496.00,383.70 L496.55,382.20 L497.11,380.70 L497.67,379.20 L498.23,377.70 L498.79,376.20 L499.36,374.70 L499.92,373.20 L500.48,371.70 L501.04,370.20 L501.60,368.70 L502.16,367.20 L502.72,365.70 L503.28,364.20 L503.84,362.70 L504.39,361.20 L504.94,359.70 L505.49,358.20 L506.04,356.70 L506.58,355.20 L507.12,353.70 L507.65,352.20 L508.18,350.70 L508.71,349.20 L509.23,347.70 L509.74,346.20 L510.25,344.70 L510.75,343.20 L511.25,341.70 L511.74,340.20 L512.23,338.70 L512.70,337.20 L513.17,335.70 L513.64,334.20 L514.09,332.70 L514.54,331.20 L514.97,329.70 L515.40,328.20 L515.82,326.70 L516.23,325.20 L516.63,323.70 L517.02,322.20 L517.40,320.70 L517.77,319.20 L518.13,317.70 L518.49,316.20 L518.83,314.70 L519.16,313.20 L519.48,311.70 L519.79,310.20 L520.09,308.70 L520.38,307.20 L520.66,305.70 L520.92,304.20 L521.18,302.70 L521.42,301.20 L521.66,299.70 L521.88,298.20 L522.09,296.70 L522.29,295.20 L522.48,293.70 L522.65,292.20 L522.81,290.70 L522.97,289.20 L523.10,287.70 L523.23,286.20 L523.35,284.70 L523.45,283.20 L523.54,281.70 L523.61,280.20 L523.67,278.70 L523.72,277.20 L523.76,275.70 L523.78,274.20 L523.79,272.70 L523.79,271.20 L523.77,269.70 L523.74,268.20 L523.70,266.70 L523.65,265.20 L523.58,263.70 L523.50,262.20 L523.41,260.70 L523.32,259.20 L523.21,257.70 L523.09,256.20 L522.96,254.70 L522.82,253.20 L522.68,251.70 L522.52,250.20 L522.36,248.70 L522.19,247.20 L522.01,245.70 L521.83,244.20 L521.64,242.70 L521.45,241.20 L521.25,239.70 L521.05,238.20 L520.84,236.70 L520.63,235.20 L520.41,233.70 L520.19,232.20 L519.97,230.70 L519.74,229.20 L519.51,227.70 L519.29,226.20 L519.06,224.70 L518.83,223.20 L518.59,221.70 L518.36,220.20 L518.13,218.70 L517.90,217.20 L517.68,215.70 L517.45,214.20 L517.22,212.70 L517.00,211.20 L516.78,209.70 L516.56,208.20 L516.35,206.70 L516.14,205.20 L515.94,203.70 L515.74,202.20 L515.55,200.70 L515.36,199.20 L515.18,197.70 L515.00,196.20 L514.83,194.70 L514.67,193.20 L514.51,191.70 L514.37,190.20 L514.23,188.70 L514.10,187.20 L513.98,185.70 L513.88,184.20 L513.78,182.70 L513.69,181.20 L513.61,179.70 L513.54,178.20 L513.49,176.70 L513.45,175.20 L513.50,173.70 Z" fill="url(#body)"/><mask id="hm" maskUnits="userSpaceOnUse" x="0" y="0" width="1000" height="685"><rect x="460" y="120" width="200" height="260" fill="url(#hmg)"/></mask><g clip-path="url(#pc)"><rect x="470" y="120" width="170" height="260" fill="url(#head)" mask="url(#hm)"/><rect x="470" y="242.8" width="170" height="28.6" fill="url(#red)"/><rect x="470" y="281.6" width="170" height="28.4" fill="url(#red)"/></g><path d="M514,351 L513.40,351.00 L512.99,352.50 L512.60,354.00 L512.21,355.50 L511.83,357.00 L511.46,358.50 L511.09,360.00 L510.72,361.50 L510.35,363.00 L509.99,364.50 L509.64,366.00 L509.28,367.50 L508.94,369.00 L508.59,370.50 L508.25,372.00 L507.92,373.50 L507.59,375.00 L507.26,376.50 L506.94,378.00 L506.62,379.50 L506.30,381.00 L505.99,382.50 L505.69,384.00 L505.39,385.50 L505.09,387.00 L504.80,388.50 L504.51,390.00 L504.22,391.50 L503.94,393.00 L503.67,394.50 L503.40,396.00 L503.13,397.50 L502.87,399.00 L502.62,400.50 L502.36,402.00 L502.12,403.50 L501.87,405.00 L501.64,406.50 L501.40,408.00 L501.18,409.50 L500.95,411.00 L500.73,412.50 L500.52,414.00 L500.31,415.50 L500.11,417.00 L499.91,418.50 L499.71,420.00 L499.52,421.50 L499.34,423.00 L499.16,424.50 L498.98,426.00 L498.81,427.50 L498.65,429.00 L498.49,430.50 L498.33,432.00 L498.18,433.50 L498.04,435.00 L497.90,436.50 L497.77,438.00 L497.64,439.50 L497.52,441.00 L497.40,442.50 L497.28,444.00 L497.18,445.50 L497.08,447.00 L496.98,448.50 L496.89,450.00 L496.80,451.50 L496.72,453.00 L496.64,454.50 L496.58,456.00 L496.51,457.50 L496.45,459.00 L496.40,460.50 L496.35,462.00 L496.31,463.50 L496.27,465.00 L496.24,466.50 L496.22,468.00 L496.20,469.50 L496.18,471.00 L496.18,472.50 L496.17,474.00 L496.18,475.50 L496.19,477.00 L496.20,478.50 L496.22,480.00 L496.25,481.50 L496.28,483.00 L496.32,484.50 L496.37,486.00 L496.42,487.50 L496.48,489.00 L496.54,490.50 L496.61,492.00 L496.68,493.50 L496.76,495.00 L496.85,496.50 L496.94,498.00 L497.04,499.50 L497.15,501.00 L497.26,502.50 L497.38,504.00 L497.50,505.50 L497.63,507.00 L497.77,508.50 L497.91,510.00 L498.06,511.50 L498.22,513.00 L498.38,514.50 L498.55,516.00 L498.73,517.50 L498.91,519.00 L499.10,520.50 L499.29,522.00 L499.49,523.50 L499.70,525.00 L499.91,526.50 L500.13,528.00 L500.36,529.50 L500.60,531.00 L500.84,532.50 L501.09,534.00 L501.34,535.50 L501.60,537.00 L501.87,538.50 L502.14,540.00 L502.43,541.50 L502.71,543.00 L503.01,544.50 L503.31,546.00 L503.62,547.50 L503.94,549.00 L504.26,550.50 L504.59,552.00 L504.93,553.50 L505.27,555.00 L505.62,556.50 L505.98,558.00 L506.35,559.50 L506.72,561.00 L507.10,562.50 L507.49,564.00 L507.88,565.50 L508.28,567.00 L508.69,568.50 L509.11,570.00 L509.53,571.50 L509.96,573.00 L510.40,574.50 L510.84,576.00 L511.30,577.50 L511.76,579.00 L513.50,580.50 L514,581 Z" fill="url(#cres)"/><path d="M514,351 L513.40,351.00 L512.99,352.50 L512.60,354.00 L512.21,355.50 L511.83,357.00 L511.46,358.50 L511.09,360.00 L510.72,361.50 L510.35,363.00 L509.99,364.50 L509.64,366.00 L509.28,367.50 L508.94,369.00 L508.59,370.50 L508.25,372.00 L507.92,373.50 L507.59,375.00 L507.26,376.50 L506.94,378.00 L506.62,379.50 L506.30,381.00 L505.99,382.50 L505.69,384.00 L505.39,385.50 L505.09,387.00 L504.80,388.50 L504.51,390.00 L504.22,391.50 L503.94,393.00 L503.67,394.50 L503.40,396.00 L503.13,397.50 L502.87,399.00 L502.62,400.50 L502.36,402.00 L502.12,403.50 L501.87,405.00 L501.64,406.50 L501.40,408.00 L501.18,409.50 L500.95,411.00 L500.73,412.50 L500.52,414.00 L500.31,415.50 L500.11,417.00 L499.91,418.50 L499.71,420.00 L499.52,421.50 L499.34,423.00 L499.16,424.50 L498.98,426.00 L498.81,427.50 L498.65,429.00 L498.49,430.50 L498.33,432.00 L498.18,433.50 L498.04,435.00 L497.90,436.50 L497.77,438.00 L497.64,439.50 L497.52,441.00 L497.40,442.50 L497.28,444.00 L497.18,445.50 L497.08,447.00 L496.98,448.50 L496.89,450.00 L496.80,451.50 L496.72,453.00 L496.64,454.50 L496.58,456.00 L496.51,457.50 L496.45,459.00 L496.40,460.50 L496.35,462.00 L496.31,463.50 L496.27,465.00 L496.24,466.50 L496.22,468.00 L496.20,469.50 L496.18,471.00 L496.18,472.50 L496.17,474.00 L496.18,475.50 L496.19,477.00 L496.20,478.50 L496.22,480.00 L496.25,481.50 L496.28,483.00 L496.32,484.50 L496.37,486.00 L496.42,487.50 L496.48,489.00 L496.54,490.50 L496.61,492.00 L496.68,493.50 L496.76,495.00 L496.85,496.50 L496.94,498.00 L497.04,499.50 L497.15,501.00 L497.26,502.50 L497.38,504.00 L497.50,505.50 L497.63,507.00 L497.77,508.50 L497.91,510.00 L498.06,511.50 L498.22,513.00 L498.38,514.50 L498.55,516.00 L498.73,517.50 L498.91,519.00 L499.10,520.50 L499.29,522.00 L499.49,523.50 L499.70,525.00 L499.91,526.50 L500.13,528.00 L500.36,529.50 L500.60,531.00 L500.84,532.50 L501.09,534.00 L501.34,535.50 L501.60,537.00 L501.87,538.50 L502.14,540.00 L502.43,541.50 L502.71,543.00 L503.01,544.50 L503.31,546.00 L503.62,547.50 L503.94,549.00 L504.26,550.50 L504.59,552.00 L504.93,553.50 L505.27,555.00 L505.62,556.50 L505.98,558.00 L506.35,559.50 L506.72,561.00 L507.10,562.50 L507.49,564.00 L507.88,565.50 L508.28,567.00 L508.69,568.50 L509.11,570.00 L509.53,571.50 L509.96,573.00 L510.40,574.50 L510.84,576.00 L511.30,577.50 L511.76,579.00 L513.50,580.50 L514,581 Z" fill="url(#cresv)"/><ellipse cx="550.75" cy="177.85" rx="28.25" ry="35.35" fill="url(#headin)"/><ellipse cx="542" cy="160" rx="7.5" ry="7" fill="url(#hl)"/></svg>
</body></html>
